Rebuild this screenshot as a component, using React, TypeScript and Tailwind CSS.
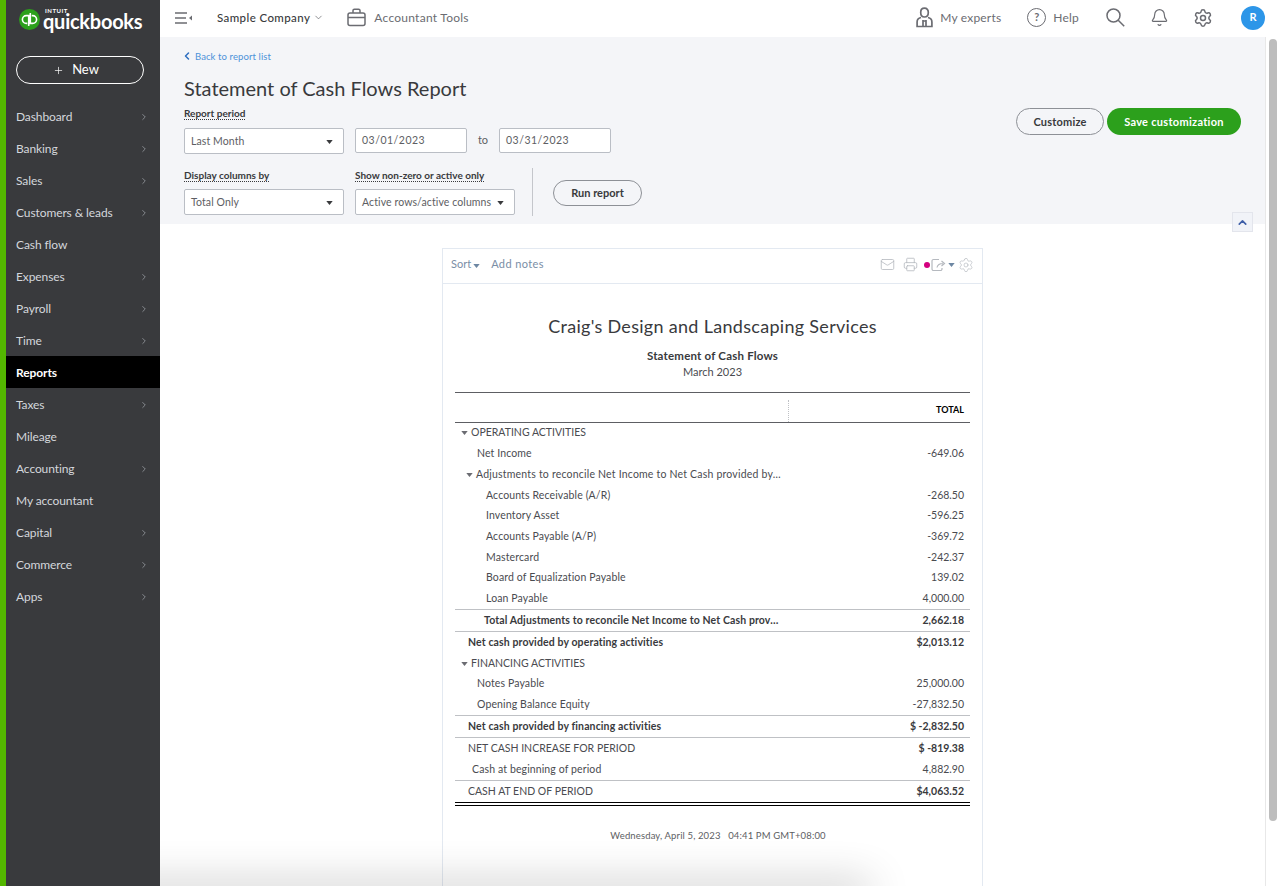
import { Bell, ChevronDown, ChevronLeft, ChevronRight, ChevronUp, Mail, Plus, Printer, Settings } from "lucide-react";

const font = { fontFamily: "Lato, 'Open Sans', sans-serif" };

const navItems = [
  { label: "Dashboard", arrow: true },
  { label: "Banking", arrow: true },
  { label: "Sales", arrow: true },
  { label: "Customers & leads", arrow: true },
  { label: "Cash flow", arrow: false },
  { label: "Expenses", arrow: true },
  { label: "Payroll", arrow: true },
  { label: "Time", arrow: true },
  { label: "Reports", arrow: false, active: true },
  { label: "Taxes", arrow: true },
  { label: "Mileage", arrow: false },
  { label: "Accounting", arrow: true },
  { label: "My accountant", arrow: false },
  { label: "Capital", arrow: true },
  { label: "Commerce", arrow: true },
  { label: "Apps", arrow: true },
];

type Row = {
  label: string;
  value?: string;
  indent: string;
  kind?: "plain" | "total" | "section";
  line?: boolean;
  caret?: boolean;
  upper?: boolean;
};

const rows: Row[] = [
  { label: "OPERATING ACTIVITIES", indent: "pl-[6px]", caret: true, upper: true },
  { label: "Net Income", value: "-649.06", indent: "pl-[22px]" },
  { label: "Adjustments to reconcile Net Income to Net Cash provided by…", indent: "pl-[11px]", caret: true },
  { label: "Accounts Receivable (A/R)", value: "-268.50", indent: "pl-[31px]" },
  { label: "Inventory Asset", value: "-596.25", indent: "pl-[31px]" },
  { label: "Accounts Payable (A/P)", value: "-369.72", indent: "pl-[31px]" },
  { label: "Mastercard", value: "-242.37", indent: "pl-[31px]" },
  { label: "Board of Equalization Payable", value: "139.02", indent: "pl-[31px]" },
  { label: "Loan Payable", value: "4,000.00", indent: "pl-[31px]" },
  { label: "Total Adjustments to reconcile Net Income to Net Cash prov…", value: "2,662.18", indent: "pl-[29px]", kind: "total", line: true },
  { label: "Net cash provided by operating activities", value: "$2,013.12", indent: "pl-[13px]", kind: "total", line: true },
  { label: "FINANCING ACTIVITIES", indent: "pl-[6px]", caret: true, upper: true },
  { label: "Notes Payable", value: "25,000.00", indent: "pl-[22px]" },
  { label: "Opening Balance Equity", value: "-27,832.50", indent: "pl-[22px]" },
  { label: "Net cash provided by financing activities", value: "$ -2,832.50", indent: "pl-[13px]", kind: "total", line: true },
  { label: "NET CASH INCREASE FOR PERIOD", value: "$ -819.38", indent: "pl-[13px]", kind: "section", line: true, upper: true },
  { label: "Cash at beginning of period", value: "4,882.90", indent: "pl-[17px]" },
  { label: "CASH AT END OF PERIOD", value: "$4,063.52", indent: "pl-[13px]", kind: "section", line: true, upper: true },
];

function Caret({ className = "" }: { className?: string }) {
  return (
    <svg width="7" height="4" viewBox="0 0 8 5" className={className}>
      <path d="M0 0h8L4 5z" fill="currentColor" />
    </svg>
  );
}

function Logo() {
  return (
    <div className="flex items-center h-[37px] pl-[13px] pt-[1px]">
      <svg width="21" height="21" viewBox="0 0 21 21" className="shrink-0">
        <circle cx="10.5" cy="10.5" r="10.5" fill="#2ca01c" />
        <path d="M9.7 17V6.6H7.3a3.9 3.9 0 0 0 0 7.8h1M11.3 4v10.4h2.4a3.9 3.9 0 0 0 0-7.8h-1" fill="none" stroke="#fff" strokeWidth="1.6" />
      </svg>
      <div className="ml-[3px] flex flex-col text-white">
        <span className="text-[6px] leading-[6px] font-bold tracking-[0.5px] ml-[2px] mt-[-1px]">INTUIT</span>
        <span className="text-[20px] leading-[17px] font-bold tracking-[-0.25px] mt-[-1px]">quickbooks</span>
      </div>
    </div>
  );
}

function Sidebar() {
  return (
    <aside className="w-[160px] shrink-0 h-full bg-[#393a3d] border-l-[6px] border-[#53b700] relative z-10">
      <Logo />
      <button className="mt-[19px] ml-[10px] w-[128px] h-[28px] rounded-full border border-white text-white flex items-center justify-center pr-[8px] text-[13px]">
        <Plus size={11} strokeWidth={1.5} className="mr-[8px]" />
        New
      </button>
      <nav className="mt-[16px]">
        {navItems.map((item) => (
          <div
            key={item.label}
            className={`h-[32px] flex items-center justify-between pt-[2px] pl-[10px] pr-[11px] text-[12px] tracking-[-0.1px] ${
              item.active ? "bg-black text-white font-bold" : "text-[#d4d7dc]"
            }`}
          >
            <span>{item.label}</span>
            {item.arrow && <ChevronRight size={10} strokeWidth={2.2} className="text-[#8d9096]" />}
          </div>
        ))}
      </nav>
    </aside>
  );
}

function TopBar() {
  return (
    <header className="h-[37px] shrink-0 bg-white flex items-center pb-[2px] text-[#6b6c72] text-[12px]">
      <svg width="18" height="12" viewBox="0 0 18 12" className="ml-[15px] text-[#6b6c72]">
        <path d="M0 1h12M0 6h11M0 11h12" stroke="currentColor" strokeWidth="1.4" />
        <path d="M14 6l3-2.5v5z" fill="currentColor" />
      </svg>
      <span className="ml-[24px] pt-[1px] text-[#393a3d] font-medium text-[11.5px] tracking-[0.4px]">Sample Company</span>
      <ChevronDown size={11} strokeWidth={1.4} className="ml-[3px] text-[#55565b]" />
      <svg width="19" height="19" viewBox="0 0 19 19" fill="none" stroke="#6b6c72" strokeWidth="1.5" className="ml-[23px]">
        <rect x="1" y="5" width="17" height="12.5" rx="2" />
        <path d="M6 5V2.6c0-.8.6-1.4 1.4-1.4h4.2c.8 0 1.4.6 1.4 1.4V5M1 9.5h17" />
      </svg>
      <span className="ml-[8px] tracking-[0.25px]">Accountant Tools</span>
      <div className="ml-auto flex items-center">
        <svg width="17" height="21" viewBox="0 0 17 21" fill="none" stroke="#6b6c72" strokeWidth="1.7">
          <path d="M8.5 1.2c-2.4 0-3.8 1.7-3.8 4.2 0 2.2 1 4.6 3.8 4.6s3.8-2.4 3.8-4.6c0-2.5-1.4-4.2-3.8-4.2z" />
          <path d="M5 10.5c-2.5.6-3.9 2-3.9 4.4v4.6h14.8v-4.6c0-2.4-1.4-3.8-3.9-4.4M7 13v6M10 13v6M7 14h3" />
        </svg>
        <span className="ml-[7px] tracking-[0.2px]">My experts</span>
        <div className="ml-[26px] w-[19px] h-[19px] rounded-full border-[1.5px] border-[#6b6c72] flex items-center justify-center text-[11px] font-bold">?</div>
        <span className="ml-[7px] tracking-[0.2px]">Help</span>
        <svg width="19" height="19" viewBox="0 0 19 19" fill="none" stroke="#6b6c72" strokeWidth="1.5" className="ml-[27px]">
          <circle cx="7.5" cy="7.5" r="6.5" />
          <path d="M12.2 12.2l6 6" />
        </svg>
        <Bell size={19} strokeWidth={1.5} className="ml-[25px]" />
        <Settings size={20} strokeWidth={1.8} className="ml-[24px]" />
        <div className="ml-[28px] mr-[15px] w-[24px] h-[24px] rounded-full bg-[#2d96e8] text-white flex items-center justify-center text-[11px] font-bold">R</div>
      </div>
    </header>
  );
}

function FieldLabel({ children }: { children: string }) {
  return (
    <div className="h-[13px] leading-[12px] text-[10px] font-bold text-[#393a3d] w-fit border-b border-dotted border-[#393a3d]">
      {children}
    </div>
  );
}

function Select({ value, className = "" }: { value: string; className?: string }) {
  return (
    <div className={`h-[26px] bg-white border border-[#babec5] rounded-[2px] flex items-center justify-between pt-[1px] pl-[6px] pr-[10px] text-[10.5px] text-[#5d5e63] tracking-[0.1px] ${className}`}>
      <span>{value}</span>
      <Caret className="text-[#393a3d] shrink-0" />
    </div>
  );
}

function DateInput({ value }: { value: string }) {
  return (
    <div className="w-[112px] h-[25px] bg-white border border-[#babec5] rounded-[2px] flex items-center pl-[6px] text-[10.5px] text-[#5d5e63] tracking-[0.5px]">
      {value}
    </div>
  );
}

function Filters() {
  return (
    <section className="h-[187px] shrink-0 bg-[#f4f5f8] pl-[24px] pr-[24px] relative">
      <div className="pt-[13px] h-[37px] flex items-start text-[9.5px] text-[#4d92d8] tracking-[0.1px]">
        <ChevronLeft size={12} strokeWidth={3} className="text-[#2f6fc0] ml-[-3px] mr-[2px]" />
        <span>Back to report list</span>
      </div>
      <h1 className="text-[20px] leading-[28px] text-[#393a3d]">Statement of Cash Flows Report</h1>
      <div className="flex justify-between">
        <div>
          <div className="mt-[5px]">
            <FieldLabel>Report period</FieldLabel>
          </div>
          <div className="flex items-start mt-[8px]">
            <Select value="Last Month" className="w-[160px]" />
            <div className="ml-[11px]">
              <DateInput value="03/01/2023" />
            </div>
            <span className="w-[32px] leading-[23px] text-center text-[11px] text-[#5d5e63]">to</span>
            <DateInput value="03/31/2023" />
          </div>
          <div className="flex mt-[15px]">
            <div className="w-[160px]">
              <FieldLabel>Display columns by</FieldLabel>
              <Select value="Total Only" className="w-[160px] mt-[7px]" />
            </div>
            <div className="w-[160px] ml-[11px]">
              <FieldLabel>Show non-zero or active only</FieldLabel>
              <Select value="Active rows/active columns" className="w-[160px] mt-[7px]" />
            </div>
            <div className="ml-[17px] h-[48px] w-px bg-[#c4c6cb] mt-[-1px]" />
            <button className="ml-[20px] mt-[11px] w-[89px] h-[26px] rounded-full border border-[#8d9096] text-[11px] font-bold text-[#393a3d]">Run report</button>
          </div>
        </div>
        <div className="flex gap-[3px] mt-[6px]">
          <button className="w-[88px] h-[27px] pt-[1px] rounded-full border border-[#8d9096] text-[11px] font-bold tracking-[0.2px] text-[#393a3d]">Customize</button>
          <button className="w-[134px] h-[27px] pt-[1px] rounded-full bg-[#2ca01c] text-[11px] font-bold tracking-[0.3px] text-white">Save customization</button>
        </div>
      </div>
      <button className="absolute right-[12px] top-[175px] w-[21px] h-[20px] bg-[#f1f3f8] border border-[#e3e5ec] flex items-center justify-center text-[#3f5fa8]">
        <ChevronUp size={13} strokeWidth={3} />
      </button>
    </section>
  );
}

function ReportRow({ row }: { row: Row }) {
  const total = row.kind === "total";
  const section = row.kind === "section";
  const spacing = row.upper ? "" : row.caret ? "tracking-[0.2px]" : "tracking-[0.12px]";
  return (
    <div
      className={`flex items-center justify-between pr-[6px] text-[10.5px] text-[#4a4b50] ${row.indent} ${
        row.line ? "h-[22px] border-t border-[#bfc1c5]" : "h-[20.7px]"
      } ${total ? "font-bold text-[#393a3d]" : ""}`}
    >
      <span className={`flex items-center whitespace-nowrap ${spacing}`}>
        {row.caret && <Caret className="mr-[3px] text-[#6b6c72]" />}
        {row.label}
      </span>
      {row.value && <span className={total || section ? "font-bold text-[#393a3d]" : ""}>{row.value}</span>}
    </div>
  );
}

function Report() {
  return (
    <div className="w-[541px] mt-[24px] ml-[282px] border border-b-0 border-[#e3e9f1] bg-white">
      <div className="h-[35px] border-b border-[#e3e9f1] flex items-center pl-[8px] pr-[8px] pb-[3px] text-[11px] text-[#7a8ea6]">
        <span>Sort</span>
        <Caret className="ml-[2px] mt-[2px] text-[#6d87a3]" />
        <span className="ml-[11px] tracking-[0.4px]">Add notes</span>
        <div className="ml-auto flex items-center text-[#b5b9bf]">
          <Mail size={15} strokeWidth={1.3} />
          <Printer size={15} strokeWidth={1.3} className="ml-[8px]" />
          <span className="ml-[6px] w-[6px] h-[6px] rounded-full bg-[#d4007f]" />
          <svg width="15" height="14" viewBox="0 0 15 14" fill="none" stroke="currentColor" strokeWidth="1.2" className="ml-[1px]">
            <path d="M8 1.5H2.5a1.5 1.5 0 0 0-1.5 1.5v8a1.5 1.5 0 0 0 1.5 1.5h7a1.5 1.5 0 0 0 1.5-1.5v-1" />
            <path d="M6 9.5c.5-2.5 2.5-4 6-4M10.5 3l3 2.5-3 2.5" />
          </svg>
          <Caret className="ml-[2px] text-[#6d87a3]" />
          <Settings size={16} strokeWidth={1} className="ml-[3px]" />
        </div>
      </div>
      <div className="px-[12px] pt-[30px] h-[640px]">
        <div className="text-center text-[18px] leading-[24px] text-[#393a3d] tracking-[0.3px]">Craig's Design and Landscaping Services</div>
        <div className="text-center text-[11.5px] leading-[14px] mt-[11px] font-bold text-[#393a3d] tracking-[0.2px]">Statement of Cash Flows</div>
        <div className="text-center text-[11px] leading-[14px] mt-[2px] text-[#4a4b50]">March 2023</div>
        <div className="mt-[13px] h-[31px] border-y border-[#5d5e63] flex items-center justify-end relative pr-[6px] pt-[5px] text-[9px] font-bold text-black">
          <div className="absolute left-[333px] top-[7px] h-[22px] border-l border-dotted border-[#bfc1c5]" />
          TOTAL
        </div>
        <div>
          {rows.map((row) => (
            <ReportRow key={row.label} row={row} />
          ))}
        </div>
        <div className="h-[4px] border-y border-black" />
        <div className="text-center pl-[11px] text-[9.5px] leading-[12px] text-[#5d5e63] mt-[24px] tracking-[0.13px] whitespace-pre">Wednesday, April 5, 2023   04:41 PM GMT+08:00</div>
      </div>
    </div>
  );
}

export default function App() {
  return (
    <div className="w-[1280px] h-[886px] flex overflow-hidden bg-white relative" style={font}>
      <Sidebar />
      <div className="flex-1 min-w-0 flex flex-col h-full">
        <TopBar />
        <div className="flex-1 min-h-0 flex">
          <main className="flex-1 min-w-0 overflow-hidden relative">
            <Filters />
            <Report />
            {/* shadow of a drawer that sits just below the fold */}
            <div className="absolute left-[-80px] bottom-[-10px] w-[790px] h-[10px] shadow-[0_0_40px_rgba(0,0,0,0.45)]" />
          </main>
          <div className="w-[15px] shrink-0 bg-white border-l border-[#e8e8e8] pt-[2px] pl-[3px]">
            <div className="w-[8px] h-[782px] rounded-full bg-[#bdbdbd]" />
          </div>
        </div>
      </div>
    </div>
  );
}
